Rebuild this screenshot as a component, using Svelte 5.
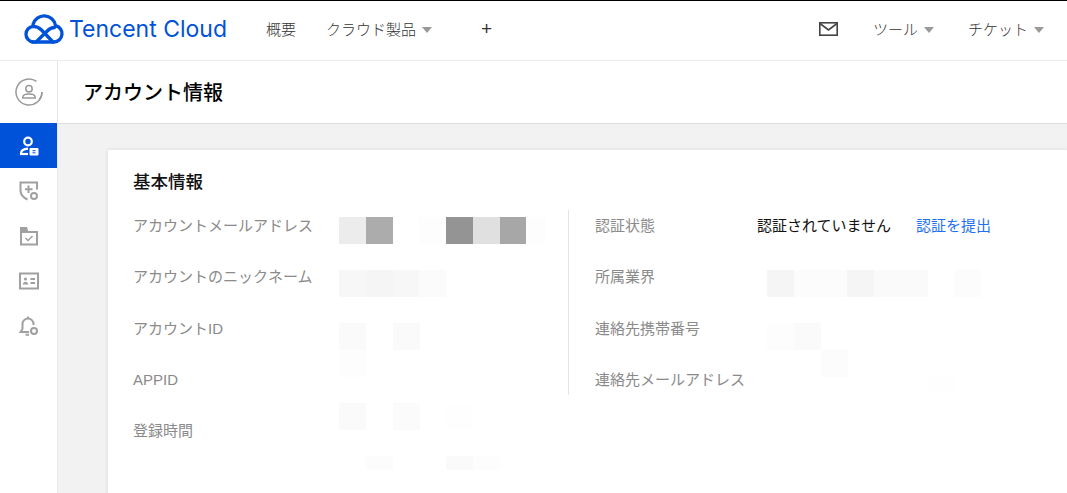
<script>
  const tiles = [
    [0,0,236],[1,0,172],[3,0,253],[4,0,148],[5,0,224],[6,0,167],[7,0,253,27,19],
    [0,2,247],[1,2,245],[2,2,247],[3,2,251],
    [0,4,250],[2,4,250],[0,5,253],
    [0,7,250],[2,7,251],[4,7,254],
    [1,9,252,14],[4,9,250,14],[5,9,253,14],
    [16,2,245],[17,2,252],[18,2,252],[19,2,245],[20,2,250],[21,2,250],[23,2,252],
    [16,4,253],[17,4,250],[18,5,252],[22,6,254,14]
  ];
  const grey = (v) => `rgb(${v},${v},${v})`;
  const leftRows = [
    { label: 'アカウントメールアドレス' },
    { label: 'アカウントのニックネーム' },
    { label: 'アカウントID' },
    { label: 'APPID' },
    { label: '登録時間' }
  ];
  const rightRows = [
    { label: '認証状態', status: true },
    { label: '所属業界' },
    { label: '連絡先携帯番号' },
    { label: '連絡先メールアドレス' }
  ];
</script>

<div class="page">
  <header class="topbar">
    <div class="brand">
      <svg class="cloud" viewBox="0 0 42 30" width="42" height="30" fill="none" stroke="#0052d9" stroke-width="3.300" stroke-linecap="round" stroke-linejoin="round">
        <path d="M10.500 28H32a8.300 8.300 0 0 0 1.500-16.400A11.500 11.500 0 0 0 11 10.500" />
        <path d="M31 28l-11.500-12c-2.500-2.500-5-3.700-8.500-3.700a7.900 7.900 0 0 0 0 15.700" />
        <path d="M14 28l11-10.800c2.500-2.500 4.500-3.700 7.500-3.700" />
      </svg>
      <span class="brand-text">Tencent Cloud</span>
    </div>
    <nav class="nav">
      <span class="nav-item">概要</span>
      <span class="nav-item products">クラウド製品<i class="caret"></i></span>
      <span class="plus">+</span>
    </nav>
    <div class="right-nav">
      <svg class="mail" viewBox="0 0 19 14" width="19" height="14" fill="none" stroke="#444" stroke-width="1.600">
        <rect x="0.800" y="0.800" width="17.400" height="12.400" />
        <path d="M1 1.500l8.500 6.500 8.500-6.500" />
      </svg>
      <span class="nav-item tool">ツール<i class="caret"></i></span>
      <span class="nav-item ticket">チケット<i class="caret"></i></span>
    </div>
  </header>

  <div class="body">
    <aside class="side">
      <div class="avatar">
        <svg viewBox="0 0 28 28" width="28" height="28" fill="none" stroke="#9a9a9a" stroke-width="1.500">
          <path d="M27 14A13 13 0 1 1 21.500 3.400" />
          <path d="M27 14a13 13 0 0 1-3 8.300" />
          <circle cx="14" cy="10.800" r="3.200" />
          <path d="M7.800 20v-.800c0-1.800 2.500-3.200 6.200-3.200s6.200 1.400 6.200 3.200v.800z" />
        </svg>
      </div>
      <div class="side-item active">
        <svg viewBox="0 0 20 20" width="20" height="20" fill="none" stroke="#fff" stroke-width="2.200">
          <circle cx="9" cy="5.500" r="3.800" />
          <path d="M2 18v-.500c0-2.700 2.500-4.500 7-4.800" />
          <path d="M1 18h8" />
          <path d="M11 12.500h8v6.500h-8z" fill="#fff" stroke-width="1" />
          <path d="M13.500 14.700h3M13.500 16.800h3" stroke="#0052d9" stroke-width="1" />
        </svg>
      </div>
      <div class="side-item">
        <svg viewBox="0 0 20 20" width="20" height="20" fill="none" stroke="#a0a0a0" stroke-width="2">
          <path d="M8.500 18.500C4 16.500 1.500 14 1.500 9.500V1.500h16.500v7" />
          <path d="M9.500 4.500v7.500M6 8.200h7.500" />
          <circle cx="15" cy="15" r="3" />
        </svg>
      </div>
      <div class="side-item">
        <svg viewBox="0 0 20 20" width="20" height="20" fill="none" stroke="#a0a0a0" stroke-width="2">
          <path d="M2 3.500V18.500h16V6H2" />
          <path d="M1 1h7l1.500 5H1z" fill="#a0a0a0" stroke="none" />
          <path d="M6.500 12l2.500 2.500 4.500-4.500" stroke-width="1.500" />
        </svg>
      </div>
      <div class="side-item">
        <svg viewBox="0 0 20 18" width="20" height="18" fill="none" stroke="#a0a0a0" stroke-width="2">
          <rect x="1" y="1.500" width="18" height="15" />
          <circle cx="6.500" cy="7" r="1.600" fill="#a0a0a0" stroke="none" />
          <path d="M3.800 12.500c0-1.800 1.300-2.700 2.700-2.700s2.700.9 2.700 2.700z" fill="#a0a0a0" stroke="none" />
          <path d="M11.500 7h4.500M11.500 11h4.500" stroke-width="1.800" />
        </svg>
      </div>
      <div class="side-item">
        <svg viewBox="0 0 20 20" width="20" height="20" fill="none" stroke="#a0a0a0" stroke-width="2">
          <path d="M10 16H1.500l2-3V8a5.500 5.500 0 0 1 11 0v1" />
          <path d="M9 .5v2M6.500 18.800h3.500" />
          <circle cx="15" cy="15" r="3" />
        </svg>
      </div>
    </aside>

    <main class="main">
      <div class="title-bar">アカウント情報</div>
      <div class="content">
        <section class="card">
          <h2>基本情報</h2>
          <div class="columns">
            <div class="col left">
              {#each leftRows as row}
                <div class="row">
                  <span class="label">{row.label}</span>
                </div>
              {/each}
            </div>
            <div class="col right">
              {#each rightRows as row}
                <div class="row">
                  <span class="label">{row.label}</span>
                  {#if row.status}
                    <span class="status">認証されていません</span><span class="link">認証を提出</span>
                  {/if}
                </div>
              {/each}
            </div>
          </div>
          <div class="mosaic">
            {#each tiles as t}
              <b class="tile" style="left:{t[0] * 26.75}px;top:{t[1] * 26.6}px;height:{t[3] ?? 27}px;width:{t[4] ?? 27}px;background:{grey(t[2])}"></b>
            {/each}
          </div>
        </section>
      </div>
    </main>
  </div>
</div>

<style>
  :global(body) {
    margin: 0;
    overflow: hidden;
    background: #fff;
  }
  .page {
    width: 1067px;
    height: 493px;
    overflow: hidden;
    font-family: "Liberation Sans", "Noto Sans CJK JP", sans-serif;
    font-weight: 300;
    display: flex;
    flex-direction: column;
    border-top: 1px solid #000;
    box-sizing: border-box;
  }
  .topbar {
    height: 59px;
    flex: none;
    box-sizing: content-box;
    display: flex;
    align-items: center;
    border-bottom: 1px solid #ececf0;
    padding: 0 23px 0 22px;
    font-size: 15px;
    color: #333;
  }
  .topbar > * { position: relative; top: -2px; }
  .brand {
    display: flex;
    align-items: center;
    gap: 5px;
    width: 244px;
  }
  .brand-text {
    font-family: "Inter", "Roboto", sans-serif;
    font-weight: 400;
    font-size: 23px;
    color: #0052d9;
  }
  .nav {
    display: flex;
    align-items: center;
    flex: 1;
  }
  .nav-item {
    display: inline-flex;
    align-items: center;
    white-space: nowrap;
  }
  .products { margin-left: 30px; }
  .plus {
    margin-left: 49px;
    font-size: 19px;
    font-weight: 400;
    color: #333;
  }
  .caret {
    display: inline-block;
    margin-left: 6px;
    margin-top: 2px;
    border-left: 5px solid transparent;
    border-right: 5px solid transparent;
    border-top: 6px solid #999;
  }
  .right-nav {
    display: flex;
    align-items: center;
  }
  .tool { margin-left: 35px; }
  .ticket { margin-left: 34px; }
  .body {
    flex: 1;
    display: flex;
    min-height: 0;
  }
  .side {
    width: 57px;
    flex: none;
    border-right: 1px solid #e8e8e8;
    display: flex;
    flex-direction: column;
    align-items: stretch;
    box-sizing: content-box;
  }
  .avatar {
    height: 62px;
    display: flex;
    align-items: center;
    justify-content: center;
  }
  .side-item {
    height: 45px;
    display: flex;
    align-items: center;
    justify-content: center;
  }
  .main {
    flex: 1;
    min-width: 0;
    display: flex;
    flex-direction: column;
    background: #f2f2f2;
  }
  .side-item.active { background: #0052d9; }
  .title-bar {
    height: 63px;
    flex: none;
    box-sizing: border-box;
    background: #fff;
    border-bottom: 1px solid #dedede;
    padding: 0 0 2px 25px;
    display: flex;
    align-items: center;
    font-size: 20px;
    font-weight: 500;
    color: #000;
  }
  .content {
    flex: 1;
    padding: 26px 0 0 50px;
    min-height: 0;
  }
  .card {
    position: relative;
    background: #fff;
    height: 400px;
    box-shadow: 0 0 4px rgba(0, 0, 0, 0.120);
    padding: 20px 0 0 25px;
    box-sizing: border-box;
  }
  h2 {
    margin: 0;
    font-size: 17.500px;
    line-height: 24px;
    font-weight: 500;
    color: #111;
  }
  .columns {
    display: flex;
    margin-top: 17px;
  }
  .col { flex: none; }
  .col.left { width: 435px; }
  .col.right {
    width: 470px;
    border-left: 1px solid #e4e4e4;
    padding: 1px 0 0 26px;
    margin-top: -1px;
    height: 184px;
  }
  .row {
    display: flex;
    height: 51.300px;
    font-size: 15px;
    line-height: 30px;
    white-space: nowrap;
  }
  .label {
    color: #8a8a8a;
    font-weight: 400;
  }
  .right .label { width: 162px; }
  .mosaic {
    position: absolute;
    left: 231px;
    top: 67px;
  }
  .tile {
    position: absolute;
  }
  .status { color: #111; font-weight: 400; }
  .link { margin-left: 25px; color: #1f6fef; font-weight: 400; }
</style>
